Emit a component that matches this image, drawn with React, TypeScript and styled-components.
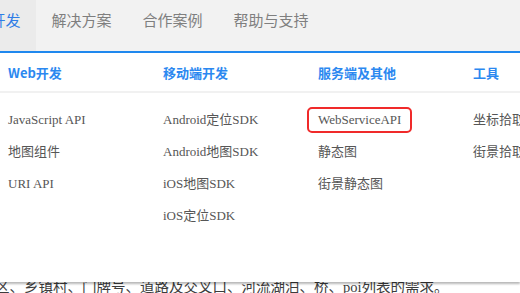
import React from "react";
import styled, { createGlobalStyle } from "styled-components";

const Global = createGlobalStyle`
  html, body { margin: 0; padding: 0; background: #fff; }
  body { width: 520px; height: 293px; overflow: hidden; }
`;

const Page = styled.div`
  position: relative;
  width: 520px;
  height: 293px;
  overflow: hidden;
  font-family: "Noto Sans CJK SC", sans-serif;
`;

const Nav = styled.nav`
  display: flex;
  height: 51px;
  background: #f2f2f2;
  margin-left: -25px;
`;

const Tab = styled.div<{ $active?: boolean }>`
  display: flex;
  align-items: flex-start;
  padding: 10px 15.5px 0;
  font-size: 15px;
  line-height: 20px;
  white-space: nowrap;
  color: ${(p) => (p.$active ? "#2f7de6" : "#7f7f7f")};
  background: ${(p) => (p.$active ? "#ebebeb" : "transparent")};
`;

const Content = styled.div`
  padding-top: 226px;
`;

const Paragraph = styled.p`
  margin: 0 0 0 -5px;
  font-family: "Liberation Serif", "Noto Sans CJK SC", serif;
  font-size: 14.5px;
  line-height: 20px;
  color: #3c3c3c;
  white-space: nowrap;
`;

const Dropdown = styled.div`
  position: absolute;
  top: 51px;
  left: 0;
  width: 520px;
  height: 229px;
  background: #fff;
  border-top: 2px solid #1f88ee;
  box-shadow: 0 2px 2px rgba(0, 0, 0, 0.28);
`;

const Grid = styled.div`
  display: grid;
  grid-template-columns: repeat(4, 155px);
`;

const HeaderRow = styled(Grid)`
  height: 38px;
  align-items: center;
  border-bottom: 2px solid #f1f1f1;
`;

const Heading = styled.div`
  padding-left: 8px;
  font-size: 13px;
  font-weight: 700;
  color: #2b88f0;
  white-space: nowrap;
`;

const Body = styled(Grid)`
  padding-top: 11px;
  align-items: start;
`;

const Column = styled.div`
  display: flex;
  flex-direction: column;
  padding-left: 8px;
`;

const Item = styled.div<{ $boxed?: boolean }>`
  position: relative;
  align-self: flex-start;
  font-family: "Liberation Serif", "Noto Sans CJK SC", serif;
  font-size: 13px;
  line-height: 32px;
  color: #565656;
  white-space: nowrap;
  &::after {
    content: "";
    display: ${(p) => (p.$boxed ? "block" : "none")};
    position: absolute;
    left: -11px;
    right: -11px;
    top: 3px;
    bottom: 3px;
    border: 2px solid #f02a2a;
    border-radius: 5px;
  }
`;

const columns = [
  { title: "Web开发", items: ["JavaScript API", "地图组件", "URI API"] },
  {
    title: "移动端开发",
    items: ["Android定位SDK", "Android地图SDK", "iOS地图SDK", "iOS定位SDK"],
  },
  { title: "服务端及其他", items: ["WebServiceAPI", "静态图", "街景静态图"] },
  { title: "工具", items: ["坐标拾取器", "街景拾取器"] },
];

export default function App() {
  return (
    <Page>
      <Global />
      <Nav>
        <Tab $active>开发</Tab>
        <Tab>解决方案</Tab>
        <Tab>合作案例</Tab>
        <Tab>帮助与支持</Tab>
      </Nav>
      <Content>
        <Paragraph>区、乡镇村、门牌号、道路及交叉口、河流湖泊、桥、poi列表的需求。</Paragraph>
      </Content>
      <Dropdown>
        <HeaderRow>
          {columns.map((c) => (
            <Heading key={c.title}>{c.title}</Heading>
          ))}
        </HeaderRow>
        <Body>
          {columns.map((c) => (
            <Column key={c.title}>
              {c.items.map((it) => (
                <Item key={it} $boxed={it === "WebServiceAPI"}>
                  {it}
                </Item>
              ))}
            </Column>
          ))}
        </Body>
      </Dropdown>
    </Page>
  );
}
